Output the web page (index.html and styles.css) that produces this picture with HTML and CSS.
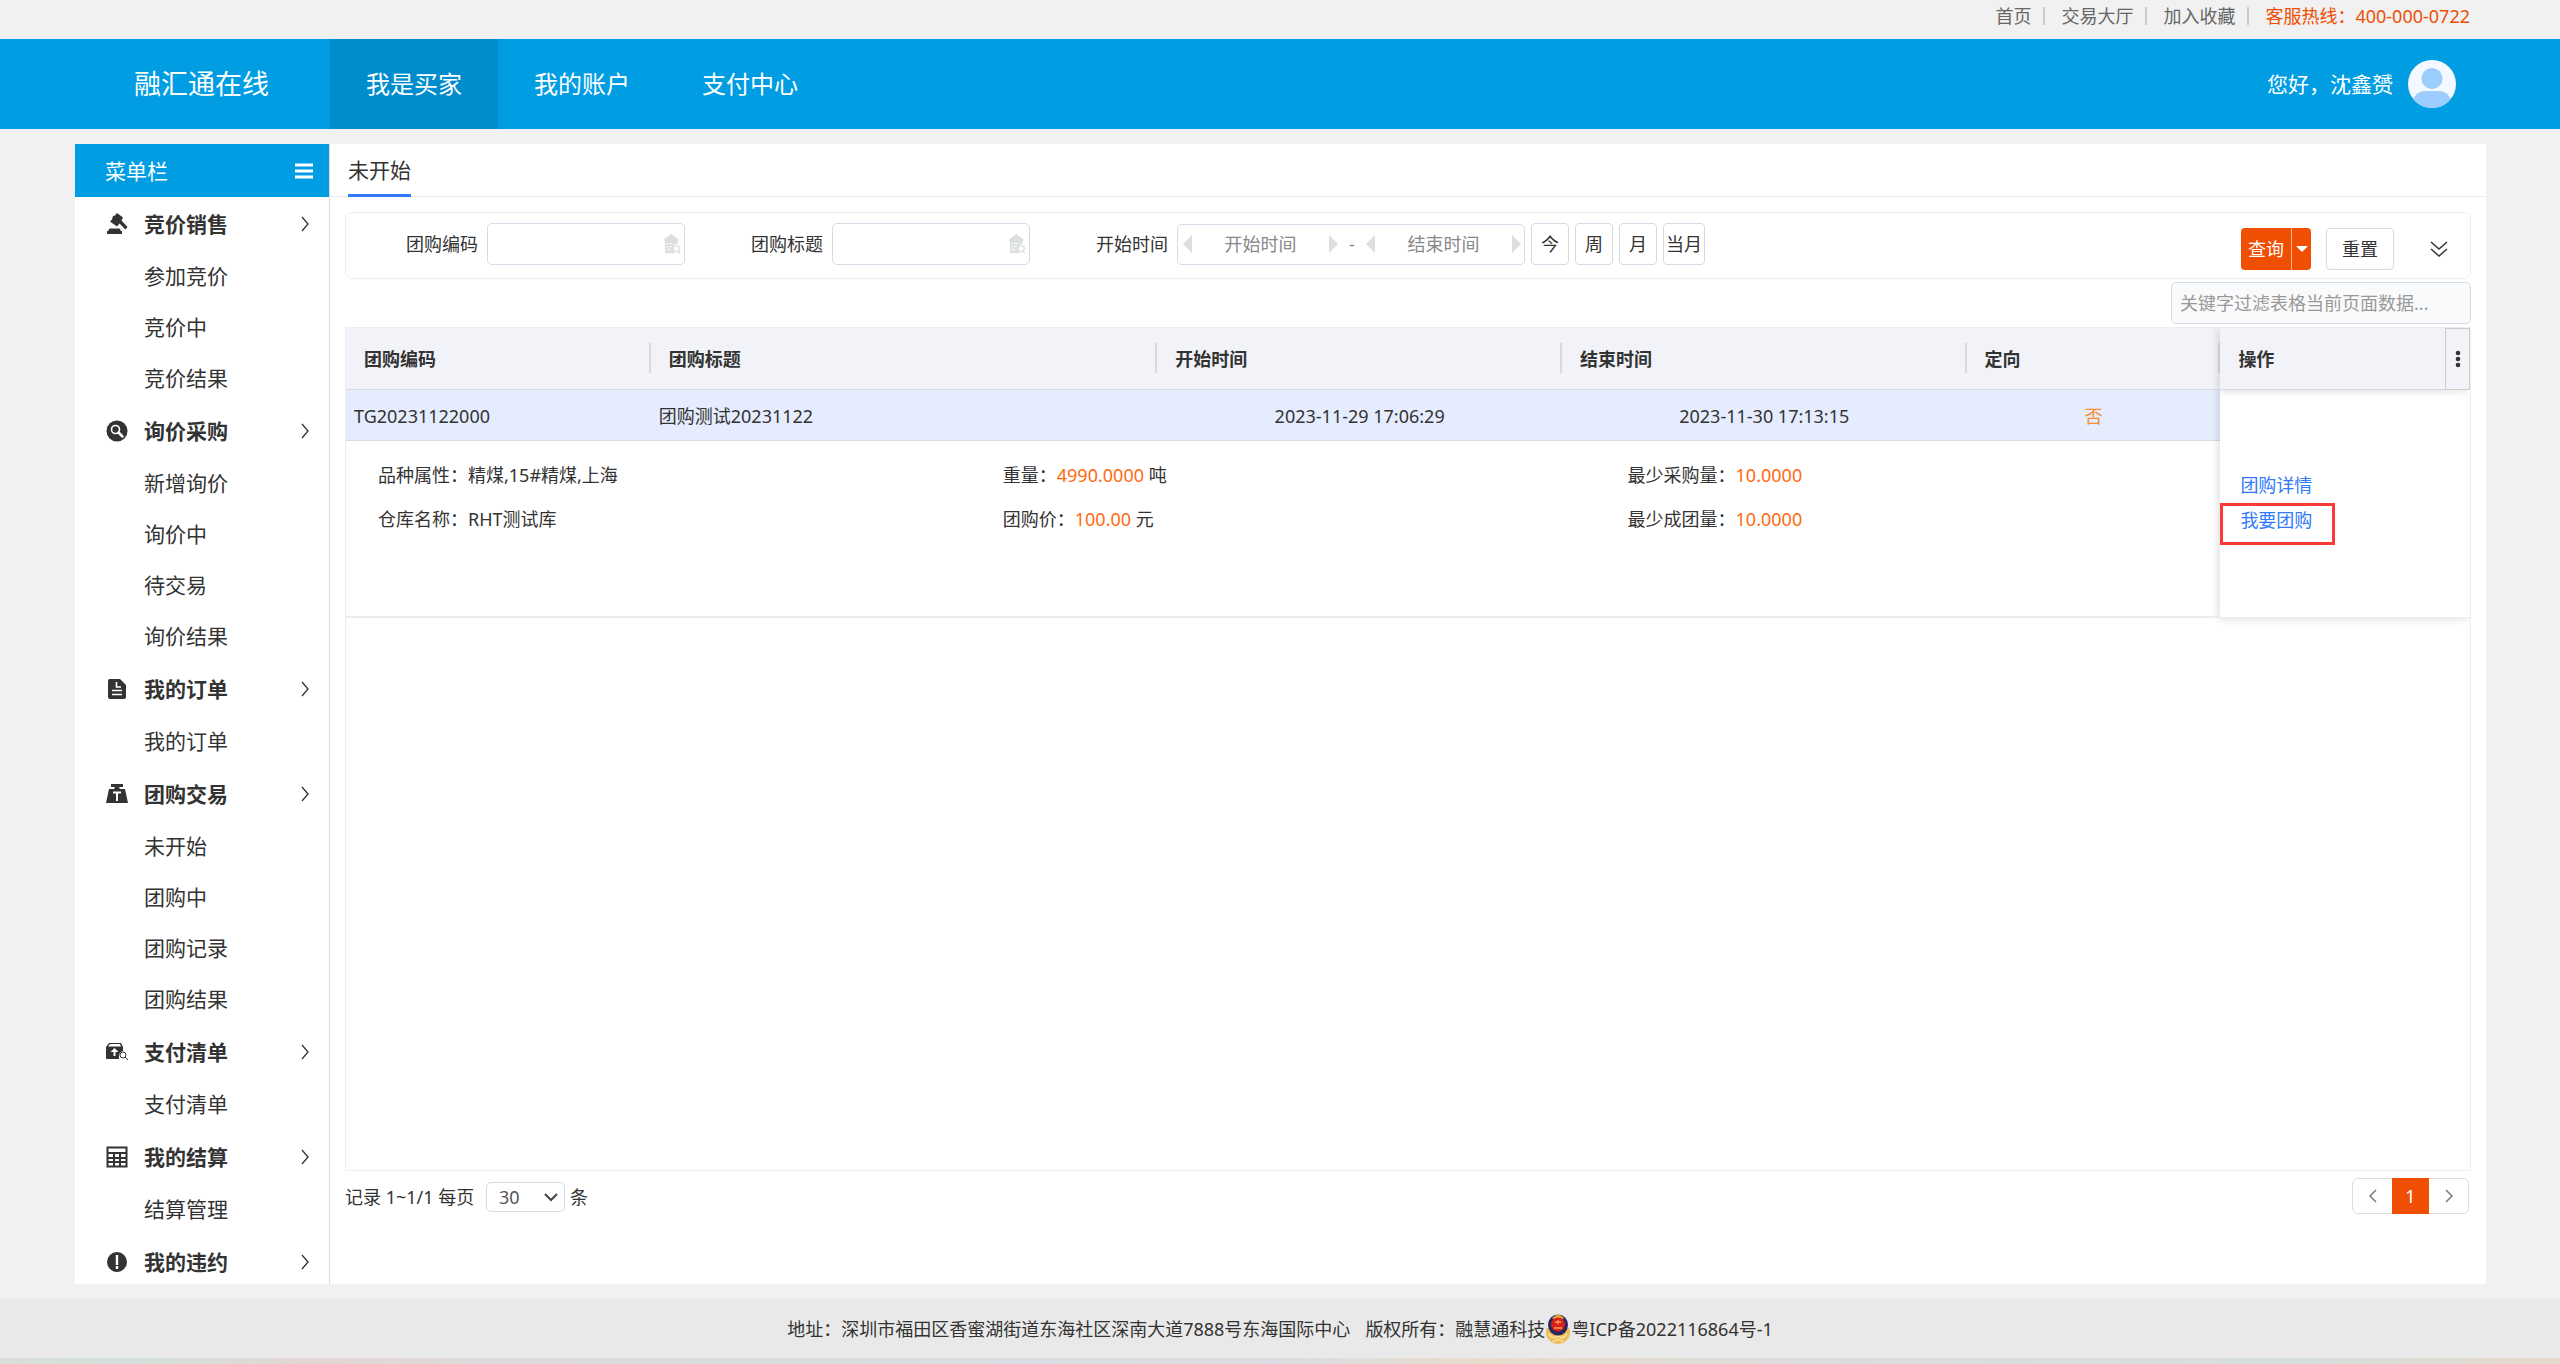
FILE: index.html
```
<!DOCTYPE html>
<html lang="zh-CN">
<head>
<meta charset="utf-8">
<title>融汇通在线</title>
<link rel="stylesheet" href="styles.css">
</head>
<body>
<svg class="sprite" aria-hidden="true">
  <symbol id="chev" viewBox="0 0 8 16"><path d="M1 1l6 7-6 7" fill="none" stroke="#333" stroke-width="1.3"/></symbol>
  <symbol id="lookup" viewBox="0 0 22 26"><path d="M10 0l9 6.500v3.500H1V6.500z" fill="#dcdfe0"/><path d="M2 9h16v4q-6 0-6 6 0 3 3 6H2z" fill="#dcdfe0"/><path d="M4 12.500h2M7.500 12.500h4M4 16.500h2M7.500 16.500h3M4 20.500h5" stroke="#fff" stroke-width="1.500"/><circle cx="16.500" cy="19" r="4" fill="#fff" stroke="#dcdfe0" stroke-width="1.600"/><path d="M19 22l2 3.500" stroke="#dcdfe0" stroke-width="2"/></symbol>
</svg>

<div class="topbar">
  <a href="#">首页</a><a href="#">交易大厅</a><a href="#">加入收藏</a><span class="hotline">客服热线：400-000-0722</span>
</div>

<header class="header">
  <div class="logo">融汇通在线</div>
  <nav class="nav">
    <a class="active" href="#">我是买家</a><a href="#">我的账户</a><a href="#">支付中心</a>
  </nav>
  <div class="user">
    <span>您好，沈鑫赟</span>
    <svg width="48" height="48" viewBox="0 0 48 48"><clipPath id="av"><circle cx="24" cy="24" r="24"/></clipPath><g clip-path="url(#av)"><rect width="48" height="48" fill="#f3f9ff"/><circle cx="24" cy="18.500" r="10.500" fill="#9dccff"/><path d="M4 48v-5q3-12 13-12h14q10 0 13 12v5z" fill="#9dccff"/></g></svg>
  </div>
</header>

<div class="page">
  <aside class="sidebar">
    <div class="side-head"><span>菜单栏</span>
      <button class="icon-btn" aria-label="收起菜单"><svg width="20" height="18" viewBox="0 0 20 18"><path d="M1 3h18M1 9h18M1 15h18" stroke="#fff" stroke-width="3"/></svg></button>
    </div>
    <nav class="menu">
      <a class="group" href="#"><svg width="22" height="22" viewBox="0 0 22 22" fill="#333"><path d="M11 0l6 4.500-1.500 3L21.500 14l-2 2.500-6-6-2.500 3-7-5 2-2 1-3.500 2-.5z"/><path d="M4 15.500h9q1.500 0 1.500 2v.5H16v3H1v-3h1.500v-.5q0-2 1.500-2z"/></svg><b>竞价销售</b><svg class="arrow"><use href="#chev"/></svg></a>
      <a href="#">参加竞价</a><a href="#">竞价中</a><a href="#">竞价结果</a>
      <a class="group" href="#"><svg width="22" height="22" viewBox="0 0 22 22"><circle cx="11" cy="11" r="10.500" fill="#333"/><circle cx="9.500" cy="9.500" r="4" fill="none" stroke="#fff" stroke-width="1.600"/><path d="M12.500 12.500l4 4" stroke="#fff" stroke-width="2.500" stroke-linecap="round"/></svg><b>询价采购</b><svg class="arrow"><use href="#chev"/></svg></a>
      <a href="#">新增询价</a><a href="#">询价中</a><a href="#">待交易</a><a href="#">询价结果</a>
      <a class="group" href="#"><svg width="22" height="22" viewBox="0 0 22 22"><path d="M4 1h10l6 6v12q0 2-2 2H4q-2 0-2-2V3q0-2 2-2z" fill="#333"/><path d="M10.500 4v5H15M6 12.500h10M6 16.500h10" fill="none" stroke="#fff" stroke-width="1.600"/></svg><b>我的订单</b><svg class="arrow"><use href="#chev"/></svg></a>
      <a href="#">我的订单</a>
      <a class="group" href="#"><svg width="22" height="22" viewBox="0 0 22 22"><path d="M5 1h12v3h-4l1 2h5l3 14H0L3 6h5l1-2H5z" fill="#333"/><path d="M7 9.500h8M11 9v9" stroke="#fff" stroke-width="2"/></svg><b>团购交易</b><svg class="arrow"><use href="#chev"/></svg></a>
      <a href="#">未开始</a><a href="#">团购中</a><a href="#">团购记录</a><a href="#">团购结果</a>
      <a class="group" href="#"><svg width="22" height="22" viewBox="0 0 22 22"><path d="M0 6l3-4h12l2 4v4q-4 1-4 5v3H1q-1 0-1-1z" fill="#333"/><path d="M2 5.500L4 3h10l1 2.500z" fill="#fff"/><path d="M8.500 7l4 4h-3v4h-2v-4h-3z" fill="#fff"/><circle cx="17" cy="14" r="3" fill="none" stroke="#333"/><path d="M19 16l3 3" stroke="#333"/></svg><b>支付清单</b><svg class="arrow"><use href="#chev"/></svg></a>
      <a href="#">支付清单</a>
      <a class="group" href="#"><svg width="22" height="22" viewBox="0 0 22 22"><path d="M1.500 1.500h19v19h-19zM1 7h20M1 12h20M1 16h20M8 7v14M14 7v14" fill="none" stroke="#333" stroke-width="2"/></svg><b>我的结算</b><svg class="arrow"><use href="#chev"/></svg></a>
      <a href="#">结算管理</a>
      <a class="group" href="#"><svg width="22" height="22" viewBox="0 0 22 22"><circle cx="11" cy="11" r="10" fill="#333"/><path d="M11 4v10M11 15v3" stroke="#fff" stroke-width="2.400"/></svg><b>我的违约</b><svg class="arrow"><use href="#chev"/></svg></a>
    </nav>
  </aside>

  <main class="main">
    <div class="tabs"><a class="tab" href="#">未开始</a></div>
    <div class="body">
      <form class="filters">
        <div class="field"><label for="code">团购编码</label><span class="lookup"><input id="code" type="text"><svg width="22" height="20"><use href="#lookup"/></svg></span></div>
        <div class="field"><label for="title">团购标题</label><span class="lookup"><input id="title" type="text"><svg width="22" height="20"><use href="#lookup"/></svg></span></div>
        <div class="field"><label for="from">开始时间</label>
          <span class="range">
            <i class="tri left"></i><input id="from" type="text" placeholder="开始时间"><i class="tri right"></i>
            <span class="dash">-</span>
            <i class="tri left"></i><input type="text" aria-label="结束时间" placeholder="结束时间"><i class="tri right"></i>
          </span>
          <span class="quick"><button type="button">今</button><button type="button">周</button><button type="button">月</button><button type="button">当月</button></span>
        </div>
        <div class="actions">
          <span class="split"><button type="button">查询</button><button type="button" class="caret" aria-label="更多"><svg width="12" height="8" viewBox="0 0 12 8"><path d="M0 1h12L6 7z" fill="#fff"/></svg></button></span>
          <button type="button" class="reset">重置</button>
          <button type="button" class="icon-btn expand" aria-label="展开"><svg width="18" height="16" viewBox="0 0 18 16"><path d="M1 1l8 7 8-7M1 8l8 7 8-7" fill="none" stroke="#333" stroke-width="1.500"/></svg></button>
        </div>
      </form>

      <div class="keyword"><input type="text" aria-label="关键字过滤" placeholder="关键字过滤表格当前页面数据..."></div>

      <div class="grid">
        <table>
          <colgroup><col class="c-code"><col class="c-title"><col class="c-time"><col class="c-time"><col class="c-dir"><col class="c-op"></colgroup>
          <thead><tr><th>团购编码</th><th>团购标题</th><th>开始时间</th><th>结束时间</th><th>定向</th><th class="op">操作<button type="button" class="cols" aria-label="列设置"><svg width="6" height="18" viewBox="0 0 6 18"><g fill="#333"><circle cx="3" cy="3" r="2.300"/><circle cx="3" cy="9" r="2.300"/><circle cx="3" cy="15" r="2.300"/></g></svg></button></th></tr></thead>
          <tbody>
            <tr class="record"><td>TG20231122000</td><td>团购测试20231122</td><td class="mid">2023-11-29 17:06:29</td><td class="mid">2023-11-30 17:13:15</td><td class="mid no">否</td>
              <td class="op" rowspan="2"><a href="#">团购详情</a><a class="join" href="#">我要团购</a></td></tr>
            <tr class="detail"><td colspan="5"><div class="facts">
              <span>品种属性：精煤,15#精煤,上海</span><span>重量：<em>4990.0000</em> 吨</span><span>最少采购量：<em>10.0000</em></span>
              <span>仓库名称：RHT测试库</span><span>团购价：<em>100.00</em> 元</span><span>最少成团量：<em>10.0000</em></span>
            </div></td></tr>
          </tbody>
        </table>
      </div>

      <div class="pager">
        <div class="size"><label for="size">记录 1~1/1 每页</label><span class="select"><select id="size"><option>30</option></select><svg width="14" height="9" viewBox="0 0 14 9"><path d="M1 1l6 6 6-6" fill="none" stroke="#444" stroke-width="2"/></svg></span><span>条</span></div>
        <div class="pages">
          <button type="button" aria-label="上一页"><svg width="8" height="14" viewBox="0 0 8 14"><path d="M7 1L1 7l6 6" fill="none" stroke="#777" stroke-width="1.500"/></svg></button><button type="button" class="on">1</button><button type="button" aria-label="下一页"><svg width="8" height="14" viewBox="0 0 8 14"><path d="M1 1l6 6-6 6" fill="none" stroke="#777" stroke-width="1.500"/></svg></button>
        </div>
      </div>
    </div>
  </main>
</div>

<footer class="footer">
  <span>地址：深圳市福田区香蜜湖街道东海社区深南大道7888号东海国际中心</span>
  <span class="owner">版权所有：融慧通科技<svg width="26" height="30" viewBox="0 0 26 30"><path d="M2 14q-3 7 2 12 4 4 9 4t9-4q5-5 2-12z" fill="#f0bd5a"/><path d="M4 20q4 6 9 2 5 4 9-2M8 28q5-5 10 0" stroke="#fbe3a0" stroke-width="1.500" fill="none"/><ellipse cx="13" cy="11" rx="10" ry="10.500" fill="#28275e"/><path d="M13 0q4 2 6 4l-6 4-6-4q3-2 6-4z" fill="#e9a83c"/><circle cx="13" cy="10.500" r="7" fill="#d8201c"/><path d="M10 8h6M9 14h8M13 6v4" stroke="#f6a04b" stroke-width="1.300"/></svg><a href="#">粤ICP备2022116864号-1</a></span>
</footer>
<div class="strip"></div>
</body>
</html>
```
FILE: styles.css
```
:root {
  --blue: #009de3;
  --orange: #ef4e03;
  --line: #eceef0;
  --field: #d5dbe6;
}
* { box-sizing: border-box; }
body {
  margin: 0;
  height: 100vh;
  display: flex;
  flex-direction: column;
  background: #f1f1f1;
  color: #333;
  font: 18px/24px "Noto Sans", "Noto Sans CJK SC", sans-serif;
}
a { color: inherit; text-decoration: none; }
button, input, select { font: inherit; color: inherit; margin: 0; }
input { min-width: 0; outline: 0; }
input::placeholder { color: #888; opacity: 1; }
button { cursor: pointer; }
.sprite { position: absolute; width: 0; height: 0; }
.icon-btn { display: flex; padding: 0; border: 0; background: none; }

.topbar {
  flex: none;
  height: 39px;
  padding: 4px 90px 0 0;
  display: flex;
  align-items: flex-start;
  justify-content: flex-end;
  color: #666;
}
.topbar a { display: flex; align-items: center; }
.topbar a::after { content: ""; width: 2px; height: 18px; margin: 0 16px 0 12px; background: #ccc; }
.hotline { color: var(--orange); }

.header {
  flex: none;
  height: 90px;
  padding: 0 104px 0 134px;
  display: flex;
  align-items: center;
  background: var(--blue);
  color: #fff;
}
.logo { width: 196px; font-size: 27px; line-height: 36px; }
.nav { display: flex; font-size: 24px; }
.nav a { padding: 0 36px; line-height: 90px; }
.nav .active { background: #008dce; }
.user { margin-left: auto; display: flex; align-items: center; gap: 15px; font-size: 21px; }

.page { flex: 1; min-height: 0; margin: 15px 74px 15px 75px; display: flex; background: #fff; }
.sidebar {
  flex: none;
  width: 255px;
  display: flex;
  flex-direction: column;
  border-right: 1px solid #ddd;
  font-size: 21px;
}
.side-head {
  flex: none;
  height: 53px;
  padding: 0 15px 0 30px;
  display: flex;
  align-items: center;
  justify-content: space-between;
  background: var(--blue);
  color: #fff;
}
.menu { flex: 1; min-height: 0; overflow-y: auto; scrollbar-width: none; }
.menu a { display: block; padding-left: 69px; line-height: 51px; }
.menu .group {
  height: 54px;
  padding: 0 20px 0 31px;
  display: flex;
  align-items: center;
  gap: 16px;
}
.arrow { width: 8px; height: 16px; margin-left: auto; }

.main { flex: 1; min-width: 0; display: flex; flex-direction: column; }
.tabs { flex: none; height: 53px; padding-left: 18px; display: flex; border-bottom: 1px solid #e8eaec; }
.tab { height: 53px; line-height: 53px; font-size: 21px; border-bottom: 3px solid #2f7bfb; }
.body { flex: 1; min-height: 0; padding: 15px 15px 0; display: flex; flex-direction: column; }

.filters {
  flex: none;
  min-height: 67px;
  padding: 0 22px 0 60px;
  display: flex;
  align-items: center;
  gap: 66px;
  border: 1px solid var(--line);
  border-radius: 6px;
}
.field { display: flex; align-items: center; padding-bottom: 3px; }
.field label { margin-right: 9px; }
.lookup {
  width: 198px;
  height: 42px;
  padding-right: 1px;
  display: flex;
  align-items: center;
  border: 1px solid var(--field);
  border-radius: 5px;
}
.lookup input { flex: 1; height: 40px; padding: 0 8px; border: 0; background: none; }
.range {
  width: 348px;
  height: 41px;
  padding: 0 3px 0 5px;
  display: flex;
  align-items: center;
  border: 1px solid var(--field);
  border-radius: 5px;
}
.range input { flex: 1; padding: 0; border: 0; background: none; text-align: center; }
.dash { width: 28px; text-align: center; color: #888; }
.tri { border: 9px solid transparent; }
.tri.left { border-left: 0; border-right-color: #ddd; }
.tri.right { border-right: 0; border-left-color: #ddd; }
.quick { display: flex; gap: 6px; margin-left: 6px; }
.quick button {
  min-width: 38px;
  height: 42px;
  padding: 0 2px;
  border: 1px solid var(--field);
  border-radius: 4px;
  background: #fff;
}
.actions { margin-left: auto; display: flex; align-items: center; padding-top: 7px; }
.split { display: flex; }
.split button {
  width: 50px;
  height: 42px;
  padding: 0;
  border: 0;
  border-radius: 4px 0 0 4px;
  background: var(--orange);
  color: #fff;
}
.split .caret {
  width: 20px;
  display: flex;
  align-items: center;
  justify-content: center;
  border-left: 1px solid #f9b795;
  border-radius: 0 4px 4px 0;
}
.reset {
  width: 68px;
  height: 42px;
  margin: 0 36px 0 15px;
  padding: 0;
  border: 1px solid var(--field);
  border-radius: 4px;
  background: #fff;
}

.keyword { flex: none; display: flex; justify-content: flex-end; padding: 3px 0; }
.keyword input {
  width: 300px;
  height: 42px;
  padding: 0 8px;
  border: 1px solid var(--field);
  border-radius: 5px;
  background: #f9fafb;
}
.keyword input::placeholder { color: #999; }

.grid { flex: 1; min-height: 0; overflow: hidden; border: 1px solid var(--line); }
table { width: 100%; table-layout: fixed; border-collapse: separate; border-spacing: 0; }
.c-code { width: 14.350%; }
.c-title { width: 23.850%; }
.c-time { width: 19.050%; }
.c-dir { width: 11.950%; }
th {
  position: relative;
  height: 62px;
  padding: 0 18px;
  text-align: left;
  background: #f2f3f8;
  border-bottom: 1px solid #d5dae6;
}
th:not(.op)::after {
  content: "";
  position: absolute;
  right: 0;
  top: 15px;
  width: 2px;
  height: 30px;
  background: #d8dae0;
}
td { padding: 2px 8px 0; }
.record td { height: 51px; background: #e5ecfd; border-bottom: 1px solid #d5dae3; }
.mid { text-align: center; }
.no { color: #fb8b2c; }
.op { box-shadow: -2px 1px 8px #0002; }
.cols {
  position: absolute;
  top: 0;
  right: 0;
  width: 25px;
  height: 62px;
  padding: 0;
  display: flex;
  align-items: center;
  justify-content: center;
  border: 1px solid #ccc;
  background: #f2f3f8;
}
.record td.op { padding: 4px 0 0; background: #fff; border-bottom: 1px solid #eceef0; line-height: 36px; color: #2f7bfb; }
.op a { display: block; padding-left: 20px; }
.op .join { width: 115px; height: 42px; padding-left: 17px; line-height: 28px; border: 3px solid #fb3939; }
.detail td { height: 177px; padding: 12px 0 0; vertical-align: top; border-bottom: 2px solid #e9ebee; }
.facts { display: grid; grid-template-columns: repeat(3, 1fr); line-height: 44px; }
.facts span { padding-left: 32px; }
em { font-style: normal; color: #ff6a10; }

.pager { flex: none; height: 113px; padding: 7px 2px 0 0; display: flex; justify-content: space-between; align-items: flex-start; }
.size { display: flex; align-items: center; gap: 5px; padding-top: 4px; }
.size label { min-width: 136px; }
.select { display: grid; align-items: center; }
.select > * { grid-area: 1 / 1; }
.select svg { justify-self: end; margin-right: 7px; pointer-events: none; }
.select select {
  appearance: none;
  width: 79px;
  height: 30px;
  padding: 0 0 0 12px;
  border: 1px solid var(--field);
  border-radius: 5px;
  background: #fff;
  color: #555;
}
.pages { display: flex; border: 1px solid #ddd; border-radius: 6px; }
.pages button {
  width: 39px;
  height: 34px;
  padding: 0;
  display: flex;
  align-items: center;
  justify-content: center;
  border: 0;
  background: none;
}
.pages .on { width: 37px; height: 36px; margin: -1px 0; background: var(--orange); color: #fff; }

.footer { flex: none; height: 59px; display: flex; align-items: center; justify-content: center; gap: 15px; background: #e9e9e9; }
.owner { display: flex; align-items: center; }
.strip { flex: none; height: 6px; background: linear-gradient(90deg, #d9dfd9, #d3e0d9 5%, #e2d6d4 12%, #d8dde0 30%, #dcdde2 50%, #e8dccb 58%, #dcdcdf 72%, #d6dfdc 90%, #e6d8ca); }
```
